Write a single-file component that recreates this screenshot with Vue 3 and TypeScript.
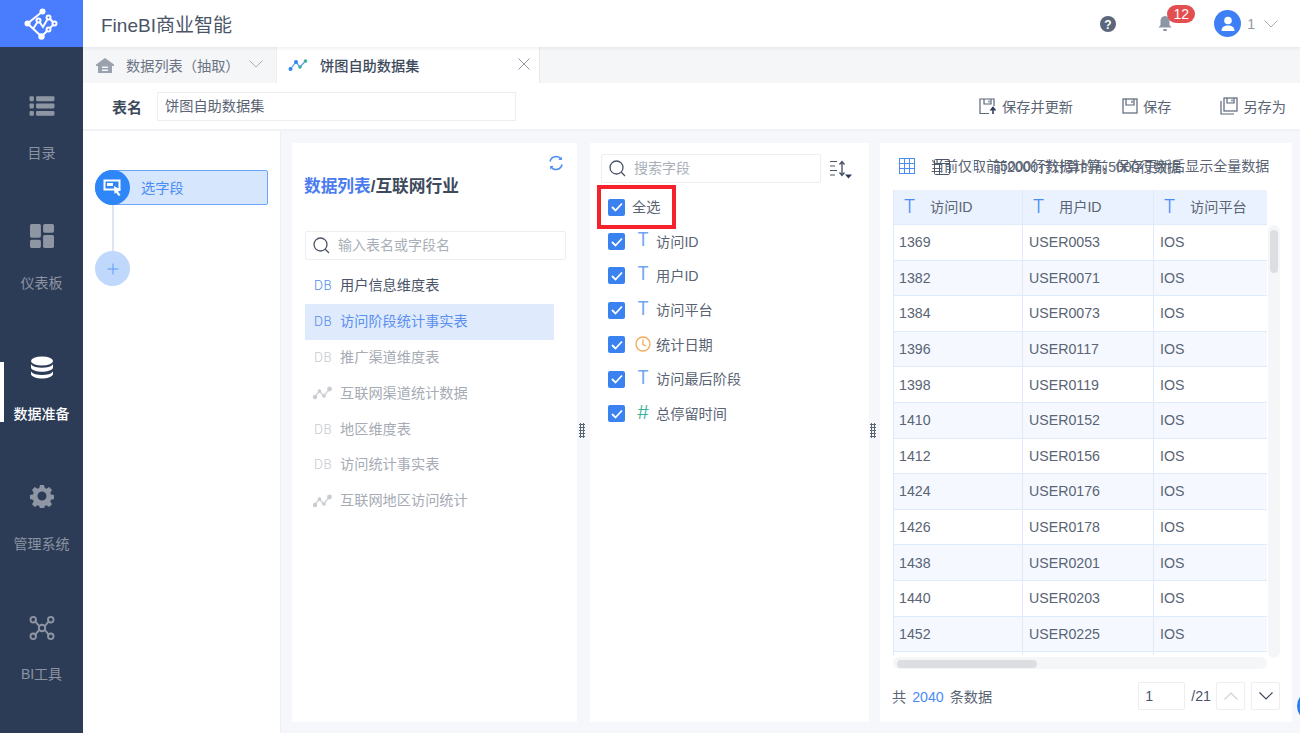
<script setup lang="ts">
interface NavItem { key: string; label: string; active?: boolean }
interface TableItem { name: string; kind: 'db' | 'line'; state: 'normal' | 'active' | 'muted' }
interface FieldItem { name: string; kind: 'T' | 'clock' | 'hash' }

const nav: NavItem[] = [
  { key: 'list', label: '目录' },
  { key: 'board', label: '仪表板' },
  { key: 'data', label: '数据准备', active: true },
  { key: 'gear', label: '管理系统' },
  { key: 'tool', label: 'BI工具' },
]
const tables: TableItem[] = [
  { name: '用户信息维度表', kind: 'db', state: 'normal' },
  { name: '访问阶段统计事实表', kind: 'db', state: 'active' },
  { name: '推广渠道维度表', kind: 'db', state: 'muted' },
  { name: '互联网渠道统计数据', kind: 'line', state: 'muted' },
  { name: '地区维度表', kind: 'db', state: 'muted' },
  { name: '访问统计事实表', kind: 'db', state: 'muted' },
  { name: '互联网地区访问统计', kind: 'line', state: 'muted' },
]
const fields: FieldItem[] = [
  { name: '访问ID', kind: 'T' },
  { name: '用户ID', kind: 'T' },
  { name: '访问平台', kind: 'T' },
  { name: '统计日期', kind: 'clock' },
  { name: '访问最后阶段', kind: 'T' },
  { name: '总停留时间', kind: 'hash' },
]
const columns = ['访问ID', '用户ID', '访问平台']
const rows: [string, string, string][] = [
  ['1369', 'USER0053', 'IOS'], ['1382', 'USER0071', 'IOS'], ['1384', 'USER0073', 'IOS'],
  ['1396', 'USER0117', 'IOS'], ['1398', 'USER0119', 'IOS'], ['1410', 'USER0152', 'IOS'],
  ['1412', 'USER0156', 'IOS'], ['1424', 'USER0176', 'IOS'], ['1426', 'USER0178', 'IOS'],
  ['1438', 'USER0201', 'IOS'], ['1440', 'USER0203', 'IOS'], ['1452', 'USER0225', 'IOS'],
  ['', '', ''],
]
</script>

<template>
  <div class="app">
    <aside class="side">
      <div class="logo">
        <svg width="36" height="36" viewBox="0 0 36 36" fill="none" stroke="#fff" stroke-width="2">
          <path d="M18.500 5.500 L3.500 17.500 L17.500 30.500 M9 23 L14.500 14.500 L19 21 L24.500 11.500 L30.500 17.500 L24.500 23.500 L17.500 30.500" />
          <circle cx="18.500" cy="5.500" r="3" fill="#fff" stroke="none" />
          <circle cx="3.500" cy="17.500" r="3" fill="#fff" stroke="none" />
          <circle cx="17.500" cy="30.500" r="3.200" fill="#fff" stroke="none" />
          <circle cx="24.500" cy="11.500" r="2" fill="#4a7cfe" />
          <circle cx="30.500" cy="17.500" r="2" fill="#4a7cfe" />
          <circle cx="24.500" cy="23.500" r="2" fill="#4a7cfe" />
          <circle cx="14.500" cy="14.500" r="2" fill="#4a7cfe" />
        </svg>
      </div>
      <nav class="nav">
        <div v-for="n in nav" :key="n.key" class="nav-item" :class="[n.key, { on: n.active }]">
          <svg v-if="n.key === 'list'" class="nav-ico" width="26" height="22" viewBox="0 0 24 20" fill="currentColor">
            <rect x="0.5" y="1" width="4" height="4.5" rx="1" /><rect x="6.5" y="1" width="17" height="4.5" rx="1" />
            <rect x="0.5" y="7.7" width="4" height="4.5" rx="1" /><rect x="6.5" y="7.7" width="17" height="4.5" rx="1" />
            <rect x="0.5" y="14.5" width="4" height="4.5" rx="1" /><rect x="6.5" y="14.5" width="17" height="4.5" rx="1" />
          </svg>
          <svg v-else-if="n.key === 'board'" class="nav-ico" width="24" height="22" viewBox="0 0 22 22" fill="currentColor">
            <rect x="0" y="0" width="10" height="12.5" rx="1.5" /><rect x="12" y="0" width="10" height="8" rx="1.5" />
            <rect x="0" y="14.5" width="10" height="7.5" rx="1.5" /><rect x="12" y="10" width="10" height="12" rx="1.5" />
          </svg>
          <svg v-else-if="n.key === 'data'" class="nav-ico" width="24" height="24" viewBox="0 0 24 24" fill="currentColor">
            <ellipse cx="12" cy="5" rx="11" ry="4.5" />
            <path d="M1 8.2c2 2.6 6 3.5 11 3.5s9-.9 11-3.5V12c-1.6 2.6-6 3.7-11 3.7S2.600 14.600 1 12z" />
            <path d="M1 15.500c2 2.600 6 3.500 11 3.500s9-.9 11-3.500v3c-1.600 2.900-6 4-11 4s-9.400-1.100-11-4z" />
          </svg>
          <svg v-else-if="n.key === 'gear'" class="nav-ico" width="26" height="26" viewBox="0 0 24 24" fill="currentColor">
            <path fill-rule="evenodd" d="M10 1h4l.7 3.100 1.700.7 2.800-1.700 2.800 2.800-1.700 2.800.7 1.700 3 .6v4l-3 .7-.7 1.700 1.700 2.800-2.800 2.800-2.800-1.700-1.700.7-.7 3h-4l-.7-3-1.700-.7-2.800 1.700-2.800-2.800 1.700-2.800-.7-1.700-3-.7v-4l3-.6.700-1.700L2 5.900l2.800-2.800 2.800 1.700 1.700-.7zM12 7.500a4.500 4.500 0 1 0 0 9 4.500 4.500 0 0 0 0-9z" />
          </svg>
          <svg v-else class="nav-ico" width="28" height="26" viewBox="0 0 28 26" fill="none" stroke="currentColor" stroke-width="2">
            <path d="M6 5 L11 11 M17 15 L22 21 M22 5 L17 11 M11 15 L6 21" />
            <circle cx="4.500" cy="4" r="3" /><circle cx="23.500" cy="4" r="3" />
            <circle cx="4.500" cy="22" r="3" /><circle cx="23.500" cy="22" r="3" />
            <circle cx="14" cy="13" r="3.500" />
          </svg>
          <span class="nav-label">{{ n.label }}</span>
        </div>
      </nav>
    </aside>

    <div class="main">
      <header class="top">
        <div class="brand">FineBI商业智能</div>
        <div class="top-right">
          <svg class="help" width="16" height="16" viewBox="0 0 16 16"><circle cx="8" cy="8" r="8" fill="#5a6679" /><text x="8" y="12.500" text-anchor="middle" font-size="12" font-weight="700" font-family="Liberation Sans" fill="#fff">?</text></svg>
          <div class="bell">
            <svg width="16" height="17" viewBox="0 0 16 17" fill="#8d96a5"><path d="M8 1c3 0 4.500 2.200 4.500 5v4l2 2.500h-13l2-2.500V6C3.500 3.200 5 1 8 1z" /><rect x="6" y="14" width="4" height="2" rx="1" /></svg>
            <span class="badge">12</span>
          </div>
          <div class="user">
            <span class="avatar">
              <svg width="16" height="16" viewBox="0 0 16 16" fill="#fff"><circle cx="8" cy="4.500" r="3.800" /><path d="M1.500 15c0-3.800 2.800-5.500 6.500-5.500s6.500 1.700 6.500 5.500z" /></svg>
            </span>
            <span class="uname">1</span>
            <svg width="14" height="8" viewBox="0 0 14 8" fill="none" stroke="#a7aeb9" stroke-width="1"><path d="M0.500 0.500 L7 7 L13.500 0.500" /></svg>
          </div>
        </div>
      </header>

      <div class="tabs">
        <div class="tab first">
          <svg width="18" height="15" viewBox="0 0 18 15" fill="#9aa2ad"><path fill-rule="evenodd" d="M9 0 L18 6.500 V8 H16 V15 H2 V8 H0 V6.500 Z M6 8.500 V10 H12 V8.500 Z M6 11.500 V13 H12 V11.500 Z" /></svg>
          <span class="tab-text">数据列表（抽取）</span>
          <svg class="tab-caret" width="14" height="8" viewBox="0 0 14 8" fill="none" stroke="#a7aeb9" stroke-width="1"><path d="M0.500 0.500 L7 7 L13.500 0.500" /></svg>
        </div>
        <div class="tab second">
          <svg width="20" height="15" viewBox="0 0 20 15" fill="none" stroke="#5a9bf6" stroke-width="1.200"><path d="M2.500 11 L8 4 L12 9 L17.500 3" /><circle cx="2.500" cy="11" r="2" fill="#2f86f6" stroke="none" /><circle cx="8" cy="4" r="2" fill="#2f86f6" stroke="none" /><circle cx="12" cy="9" r="1.800" fill="#3bb39a" stroke="none" /><circle cx="17.500" cy="3" r="1.800" fill="#3bb39a" stroke="none" /></svg>
          <span class="tab-title">饼图自助数据集</span>
          <svg class="tab-close" width="12" height="12" viewBox="0 0 12 12" stroke="#8d96a5" stroke-width="1"><path d="M0.500 0.500 L11.500 11.500 M11.500 0.500 L0.500 11.500" /></svg>
        </div>
        <div class="tab-rest"></div>
      </div>

      <div class="toolbar">
        <span class="name-label">表名</span>
        <div class="name-input">饼图自助数据集</div>
        <div class="actions">
          <span class="action a1">
            <svg width="18" height="17" viewBox="0 0 18 17" fill="none" stroke="#5a6679" stroke-width="1.200"><path d="M10 15.500H1V1h14v7" /><path d="M5 1v5h7V1" /><path d="M10 2.500v2" /><path d="M14 16v-6M11.500 12.500 14 9.500l2.500 3" stroke="#2c3c57" stroke-width="1.600" /></svg>
            保存并更新
          </span>
          <span class="action a2">
            <svg width="16" height="16" viewBox="0 0 16 16" fill="none" stroke="#5a6679" stroke-width="1.200"><rect x="1" y="1" width="14" height="14" /><path d="M4 1v6h8V1M10 2.500v2.500" /></svg>
            保存
          </span>
          <span class="action a3">
            <svg width="18" height="18" viewBox="0 0 18 18" fill="none" stroke="#5a6679" stroke-width="1.200"><rect x="4" y="1" width="13" height="13" /><path d="M7 1v5h7V1M12 2.500v2" /><path d="M1 4v13h13" /></svg>
            另存为
          </span>
        </div>
      </div>

      <div class="body">
        <section class="steps">
          <div class="step">
            <span class="step-dot">
              <svg width="20" height="18" viewBox="0 0 20 18"><rect x="1.500" y="1.500" width="15" height="9" fill="none" stroke="#fff" stroke-width="2" /><rect x="4" y="4" width="6" height="3" fill="#fff" /><path d="M11 7 L18 11 L15 12.500 L17.500 16 L15.500 17 L13 13.500 L11.500 15z" fill="#fff" /></svg>
            </span>
            <span class="step-text">选字段</span>
          </div>
          <div class="step-line"></div>
          <div class="step-add">
            <svg width="12" height="12" viewBox="0 0 12 12" stroke="#5a9bf6" stroke-width="1"><path d="M6 0.500V11.500M0.500 6H11.500" /></svg>
          </div>
        </section>

        <div class="panels">
          <section class="panel tables">
            <svg class="refresh" width="16" height="16" viewBox="0 0 16 16" fill="none" stroke="#4a8cf6" stroke-width="1.500">
              <path d="M2 6.500A6.200 6.200 0 0 1 13 4" /><path d="M14 9.500A6.200 6.200 0 0 1 3 12" />
              <path d="M13.800 1.500v3.500h-3.500z" fill="#4a8cf6" stroke="none" /><path d="M2.200 14.500V11h3.500z" fill="#4a8cf6" stroke="none" />
            </svg>
            <h2 class="crumb"><span class="crumb-link">数据列表</span>/互联网行业</h2>
            <div class="search wide">
              <svg width="17" height="17" viewBox="0 0 17 17" fill="none" stroke="#4a5568" stroke-width="1.300"><circle cx="7.500" cy="7.500" r="6.500" /><path d="M12.300 12.300 16 16" /></svg>
              <span>输入表名或字段名</span>
            </div>
            <ul class="table-list">
              <li v-for="t in tables" :key="t.name" class="table-row" :class="t.state">
                <span v-if="t.kind === 'db'" class="db">DB</span>
                <svg v-else class="line-ico" width="20" height="14" viewBox="0 0 20 14" fill="none" stroke="#d3d6db" stroke-width="1.500"><path d="M2 11 L7 5 L11 10 L17 3" /><circle cx="2.500" cy="11" r="2.200" fill="#c9ccd2" stroke="none" /><circle cx="7" cy="5" r="1.800" fill="#c9ccd2" stroke="none" /><circle cx="11.500" cy="10" r="1.800" fill="#c9ccd2" stroke="none" /><circle cx="17" cy="3" r="2.400" fill="#c9ccd2" stroke="none" /></svg>
                <span>{{ t.name }}</span>
              </li>
            </ul>
          </section>

          <div class="gutter g1"><span class="dots"></span></div>

          <section class="panel fields">
            <div class="field-head">
              <div class="search narrow">
                <svg width="17" height="17" viewBox="0 0 17 17" fill="none" stroke="#4a5568" stroke-width="1.300"><circle cx="7.500" cy="7.500" r="6.500" /><path d="M12.300 12.300 16 16" /></svg>
                <span>搜索字段</span>
              </div>
              <svg class="sort" width="24" height="22" viewBox="0 0 24 22" fill="none" stroke="#4a5568" stroke-width="1.200">
                <path d="M1 2.500h7M1 7h5M1 11.500h7M1 16h5" /><path d="M13 3v13M10.500 5.500 13 2.500l2.500 3M10.500 13.500l2.500 3 2.500-3" stroke-width="1.400" />
                <path d="M16 15.500h7l-3.500 4z" fill="#2c3c57" stroke="none" />
              </svg>
            </div>
            <div class="all-row">
              <span class="check"><svg width="12" height="10" viewBox="0 0 12 10" fill="none" stroke="#fff" stroke-width="1.800"><path d="M1 5l3.500 3.500L11 1.500" /></svg></span>
              <span class="row-text">全选</span>
              <span class="red-box"></span>
            </div>
            <div v-for="f in fields" :key="f.name" class="field-row">
              <span class="check"><svg width="12" height="10" viewBox="0 0 12 10" fill="none" stroke="#fff" stroke-width="1.800"><path d="M1 5l3.500 3.500L11 1.500" /></svg></span>
              <span v-if="f.kind === 'T'" class="type-t">T</span>
              <svg v-else-if="f.kind === 'clock'" class="type-clock" width="16" height="16" viewBox="0 0 16 16" fill="none" stroke="#f5a95a" stroke-width="1.300"><circle cx="8" cy="8" r="7" /><path d="M8 3.500V8.500L11 10" /></svg>
              <span v-else class="type-hash">#</span>
              <span class="row-text">{{ f.name }}</span>
            </div>
          </section>

          <div class="gutter g2"><span class="dots"></span></div>

          <section class="panel preview">
            <div class="notice">
              <svg class="no-shrink" width="16" height="16" viewBox="0 0 16 16" fill="none" stroke="#4a8cf6" stroke-width="1"><rect x="0.500" y="0.500" width="15" height="15" /><path d="M5.500 0.500v15M10.500 0.500v15M0.500 5.500h15M0.500 10.500h15" /></svg>
              <span class="notice-text">当前仅取前5000行数据计算，保存更新后显示全量数据</span>
              <div class="notice-over">
                <svg class="no-shrink" width="16" height="16" viewBox="0 0 16 16" fill="none" stroke="#4a5568" stroke-width="1"><rect x="0.500" y="0.500" width="15" height="15" rx="1" /><path d="M0.500 4.500h15M5.500 4.500v11" /></svg>
                <i class="v-sep"></i>
                <span>前2000行计算的前5000行数据</span>
              </div>
            </div>
            <div class="table-wrap">
              <div class="grid-clip">
                <div class="grid-row head">
                  <div v-for="c in columns" :key="c" class="cell head-cell"><span class="head-t">T</span>{{ c }}</div>
                </div>
                <div v-for="(r, i) in rows" :key="i" class="grid-row" :class="{ alt: i % 2 === 1 }">
                  <div v-for="(v, j) in r" :key="j" class="cell">{{ v }}</div>
                </div>
              </div>
              <div class="vbar"><span class="vthumb"></span></div>
              <div class="hbar"><span class="hthumb"></span></div>
            </div>
            <footer class="pager">
              <span class="total">共 <em>2040</em> 条数据</span>
              <div class="pager-right">
                <span class="page-input">1</span>
                <span class="page-total">/21</span>
                <span class="page-btn">
                  <svg width="14" height="8" viewBox="0 0 14 8" fill="none" stroke="#cfd3da" stroke-width="1.200"><path d="M0.500 7.500 L7 1 L13.500 7.500" /></svg>
                </span>
                <span class="page-btn next">
                  <svg width="14" height="8" viewBox="0 0 14 8" fill="none" stroke="#3d4a5c" stroke-width="1.200"><path d="M0.500 0.500 L7 7 L13.500 0.500" /></svg>
                </span>
              </div>
            </footer>
            <span class="float-ball"></span>
          </section>
        </div>
      </div>
    </div>
  </div>
</template>

<style>
html, body { margin: 0; height: 100%; overflow: hidden; }
</style>

<style scoped>
* { box-sizing: border-box; }
.app {
  display: flex; width: 1300px; height: 733px; overflow: hidden;
  font-family: "Liberation Sans", "Noto Sans CJK SC", sans-serif;
  font-size: 14.200px; color: #4a5568; background: #fff;
}
.no-shrink { flex: none; }
.side { width: 83px; flex: none; background: #2c3c57; display: flex; flex-direction: column; }
.logo { height: 47px; background: #4a7cfe; display: flex; align-items: center; justify-content: center; }
.nav { display: flex; flex-direction: column; padding-top: 15px; }
.nav-item {
  height: 130px; display: flex; flex-direction: column; align-items: center; position: relative;
  color: #8f96a3; padding-top: 32px;
}
.nav-ico { height: 24px; flex: none; }
.nav-label { margin-top: 26px; line-height: 20px; font-size: 14px; color: #8b93a1; }
.nav-item.list .nav-label, .nav-item.board .nav-label { margin-top: 25px; }
.nav-item.tool { padding-top: 34px; }
.nav-item.tool .nav-label { margin-top: 24px; }
.nav-item.on { color: #fff; padding-top: 34px; }
.nav-item.on .nav-label { color: #fff; font-weight: 500; margin-top: 24px; }
.nav-item.on::before { content: ""; position: absolute; left: 0; top: 40px; width: 4px; height: 60px; background: #fff; }

.main { flex: 1; min-width: 0; display: flex; flex-direction: column; }
.top {
  height: 47px; flex: none; display: flex; align-items: center; justify-content: space-between;
  padding: 0 22px 0 18px; position: relative; z-index: 2; box-shadow: 0 1px 4px rgba(0,0,0,.08); background: #fff;
}
.brand { font-size: 19px; color: #4a5568; }
.top-right { display: flex; align-items: center; }
.bell { margin-left: 41px; position: relative; width: 16px; height: 17px; }
.badge {
  position: absolute; left: 10px; top: -10px; width: 28px; height: 18px; border-radius: 9px; background: #e34f50;
  color: #fff; font-size: 14px; line-height: 18px; text-align: center;
}
.user { margin-left: 41px; display: flex; align-items: center; }
.avatar { width: 27px; height: 27px; border-radius: 50%; background: #3f7ff6; display: flex; align-items: center; justify-content: center; }
.uname { margin: 0 9px 0 6px; color: #8d96a5; font-size: 14px; }

.tabs { height: 36px; flex: none; display: flex; background: #f5f6f8; }
.tab { display: flex; align-items: center; height: 36px; }
.tab.first { width: 194px; padding-left: 13px; border-right: 1px solid #eceef1; }
.tab-text { margin-left: 12px; color: #6b7484; }
.tab-caret { margin-left: 9px; margin-top: -3px; }
.tab.second { width: 263px; background: #fff; padding-left: 11px; border-right: 1px solid #e8eaee; }
.tab-title { margin-left: 12px; color: #3d4a5c; font-weight: 500; }
.tab-close { margin-left: auto; margin-right: 9px; margin-top: -2px; }
.tab-rest { flex: 1; }

.toolbar { height: 48px; flex: none; display: flex; align-items: center; padding-left: 29px; border-bottom: 2px solid #f0f2f5; }
.name-label { font-size: 15px; font-weight: 700; color: #3d4a5c; }
.name-input { margin-left: 15px; width: 359px; height: 29px; border: 1px solid #eceef1; padding-left: 7px; line-height: 26px; color: #5a6474; }
.actions { margin-left: auto; display: flex; align-items: center; padding-right: 14px; }
.action { display: flex; align-items: center; gap: 5px; color: #5a6474; white-space: nowrap; }
.a2 { margin-left: 49px; }
.a3 { margin-left: 49px; }

.body { flex: 1; min-height: 0; display: flex; }
.steps { width: 198px; flex: none; border-right: 1px solid #eef0f3; padding: 39px 0 0 12px; background: #fff; }
.step {
  width: 173px; height: 35px; background: #d6e6fc; border: 1px solid #6ba4f8; border-radius: 18px 2px 2px 18px;
  display: flex; align-items: center; position: relative;
}
.step-dot {
  width: 35px; height: 35px; margin: -1px 0 -1px -1px; border-radius: 50%; background: #2f86f6; flex: none;
  display: flex; align-items: center; justify-content: center;
}
.step-text { margin-left: 11px; color: #4a8cf6; padding-bottom: 2px; }
.step-line { width: 2px; height: 46px; background: #dfe5ec; margin-left: 16.500px; }
.step-add { width: 35px; height: 35px; border-radius: 50%; background: #c0d8fb; display: flex; align-items: center; justify-content: center; }

.panels { flex: 1; min-width: 0; background: #f5f7fa; display: flex; padding: 12px 8px 11px 11px; }
.panel { background: #fff; position: relative; height: 579px; }
.gutter { flex: none; display: flex; align-items: center; justify-content: center; padding: 0 4px 5px 0; }
.g1 { width: 13px; }
.g2 { width: 11px; }
.dots {
  display: block; width: 6px; height: 15px;
  background-image: radial-gradient(circle, #5a6474 1px, transparent 1.100px);
  background-size: 3px 3px;
}

.tables { width: 285px; padding: 0 12px 0 13px; }
.refresh { position: absolute; left: 256px; top: 12px; }
.crumb { margin: 34px 0 0 -1px; font-size: 16.700px; font-weight: 700; line-height: 20px; color: #3d4a5c; white-space: nowrap; }
.crumb-link { color: #4a7cf0; }
.search { display: flex; align-items: center; height: 29px; border: 1px solid #eceef1; border-radius: 2px; color: #a9afb9; font-size: 14px; }
.search span { padding-bottom: 3px; }
.search.wide { width: 261px; margin-top: 34px; padding-left: 7px; gap: 8px; }
.search.narrow { width: 220px; padding-left: 7px; gap: 8px; }
.table-list { list-style: none; padding: 0; margin: 8px 0 0; width: 249px; }
.table-row { height: 35.800px; display: flex; align-items: center; padding-left: 9px; color: #4a5568; }
.table-row > span:last-child { padding-bottom: 3px; }
.table-row.active { background: #dfebfc; color: #5b8ff0; }
.table-row.muted { color: #a6abb4; }
.db {
  width: 18px; margin-right: 8px; font-family: Inter, "Liberation Sans", sans-serif; font-size: 12.500px; font-weight: 300;
  color: #5a8ff0; letter-spacing: 0.500px; flex: none;
}
.muted .db { color: #c9ccd2; }
.line-ico { margin: 0 7px 0 -2px; flex: none; width: 21px; }

.fields { width: 279px; padding: 10px 0 0 10px; }
.field-head { display: flex; align-items: center; gap: 8px; height: 30px; margin: 0 0 7px 1px; }
.sort { margin-top: 3px; }
.all-row, .field-row { display: flex; align-items: center; height: 34.400px; color: #5a6474; padding-left: 8px; }
.row-text { padding-bottom: 2px; }
.all-row { position: relative; gap: 7px; }
.check {
  width: 17px; height: 17px; border-radius: 2px; background: #3a82f0; flex: none;
  display: flex; align-items: center; justify-content: center;
}
.red-box { position: absolute; left: -3px; top: -5px; width: 79px; height: 44px; border: 4px solid #f5222d; pointer-events: none; }
.type-t { width: 16px; margin: -3px 5px 0 10px; font-family: Inter, sans-serif; font-weight: 400; font-size: 18px; line-height: 20px; color: #6ea5f5; text-align: center; }
.type-clock { margin: -2px 5px 0 10px; flex: none; }
.type-hash { width: 16px; margin: -2px 5px 0 10px; font-family: Inter, sans-serif; font-weight: 300; font-size: 19px; line-height: 20px; color: #3bb39a; text-align: center; }

.preview { flex: 1; min-width: 0; padding: 0 12px 0 13px; }
.notice { position: relative; height: 47px; display: flex; align-items: center; padding: 0 0 2px 6px; white-space: nowrap; font-size: 14px; }
.notice-text { margin-left: 15px; color: #5a6474; padding-bottom: 2px; }
.notice-over { position: absolute; left: 41px; top: 13px; display: flex; align-items: center; color: #5a6474; }
.notice-over span { padding-bottom: 2px; }
.v-sep { width: 1px; height: 16px; background: #eef0f3; margin: 0 19px 0 23px; flex: none; }
.table-wrap { position: relative; height: 479px; }
.grid-clip { width: 374px; height: 465px; overflow: hidden; border-left: 1px solid #dfeafb; }
.grid-row { display: grid; grid-template-columns: 129px 131px 113px; height: 35.600px; border-bottom: 1px solid #dfeafb; background: #fff; }
.grid-row.alt { background: #f5f9ff; }
.grid-row.head { background: #e9f2fe; height: 35px; }
.cell { display: flex; align-items: center; padding-left: 6px; border-right: 1px solid #dfeafb; color: #5a6474; white-space: nowrap; }
.cell:first-child { padding-left: 5px; }
.cell:last-child { border-right: 0; }
.head-cell, .head-cell:first-child { padding: 0 0 2px 8px; color: #5a6474; }
.head-t { font-family: Inter, sans-serif; font-weight: 300; font-size: 19px; color: #4a8cf6; width: 15px; margin-right: 13px; text-align: center; }
.vbar { position: absolute; left: 375px; top: 35px; width: 12px; height: 433px; background: #f5f6f8; border-radius: 6px; }
.vthumb { position: absolute; left: 2px; top: 5px; width: 8px; height: 43px; border-radius: 4px; background: #dcdee2; }
.hbar { position: absolute; left: 0; top: 467px; width: 374px; height: 12px; background: #f5f6f8; border-radius: 6px; }
.hthumb { position: absolute; left: 4px; top: 3px; width: 140px; height: 8px; border-radius: 4px; background: #dcdee2; }
.pager { display: flex; align-items: center; justify-content: space-between; height: 30px; margin-top: 12px; width: 387px; }
.total { color: #5a6474; padding-bottom: 1px; margin-left: -1px; }
.total em { font-style: normal; color: #4a8cf6; margin: 0 2px; }
.pager-right { display: flex; align-items: center; }
.page-input { width: 47px; height: 28px; border: 1px solid #eceef1; border-radius: 2px; line-height: 26px; padding-left: 6px; }
.page-total { margin: 0 5px 0 6px; }
.page-btn { width: 29px; height: 28px; border: 1px solid #eceef1; border-radius: 2px; display: flex; align-items: center; justify-content: center; }
.page-btn.next { margin-left: 6px; }
.float-ball { position: absolute; left: 417px; top: 547px; width: 32px; height: 32px; border-radius: 50%; background: #2f7ef0; }
</style>
